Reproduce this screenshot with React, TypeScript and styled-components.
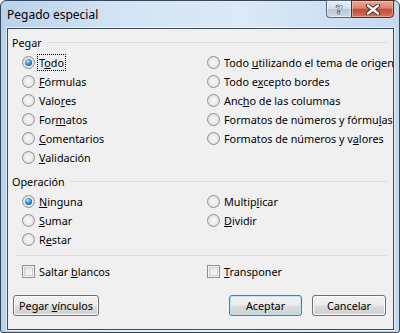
import styled, { createGlobalStyle } from "styled-components";

const Global = createGlobalStyle`
  html, body { margin: 0; padding: 0; background: #ffffff; }
  body {
    width: 400px;
    height: 333px;
    overflow: hidden;
    font-family: "Noto Sans", "Open Sans", sans-serif;
    font-size: 10.8px;
    color: #000;
  }
`;

const Window = styled.div`
  box-sizing: border-box;
  width: 400px;
  height: 333px;
  display: flex;
  flex-direction: column;
  border: 1px solid #34475c;
  border-radius: 6px 6px 3px 3px;
  background: linear-gradient(90deg, #b9d1ea 0%, #d4e4f4 30%, #dce9f6 60%, #c4d8ee 100%);
  padding: 0 5px 2px 6px;
`;

const TitleBar = styled.div`
  height: 27px;
  display: flex;
  align-items: flex-start;
  justify-content: space-between;
`;

const Title = styled.div`
  margin-top: 6px;
  font-size: 12px;
  line-height: 16px;
  color: #000;
`;

const CaptionButtons = styled.div`
  display: flex;
  margin-top: -1px;
`;

const HelpButton = styled.div`
  box-sizing: border-box;
  width: 25px;
  height: 18px;
  border: 1px solid #56687c;
  border-right: none;
  border-radius: 0 0 0 4px;
  background: linear-gradient(#e6eef7 0%, #d4dfea 48%, #b9c8d8 52%, #cdd9e6 100%);
  box-shadow: inset 0 0 0 1px rgba(255, 255, 255, 0.5);
  display: flex;
  align-items: center;
  justify-content: center;
  font-family: "DejaVu Sans", sans-serif;
  font-weight: bold;
  font-size: 13px;
  color: #fff;
  -webkit-text-stroke: 0.6px #3d4c5c;
`;

const CloseButton = styled.div`
  box-sizing: border-box;
  width: 43px;
  height: 18px;
  border: 1px solid #5a2720;
  border-radius: 0 0 4px 0;
  background: linear-gradient(#eaaa9c 0%, #dd8270 45%, #c54a33 52%, #d5735c 100%);
  box-shadow: inset 0 0 0 1px rgba(255, 220, 210, 0.45);
  display: flex;
  align-items: center;
  justify-content: center;
`;

const Client = styled.div`
  flex: 1;
  display: flex;
  flex-direction: column;
  border: 1px solid #3a4a5b;
  box-shadow: 0 0 0 1px rgba(255, 255, 255, 0.55);
  background: #f0f0f0;
  padding: 0 6px 12px 4px;
`;

const GroupHeader = styled.div<{ $top: number }>`
  height: 14px;
  margin-top: ${(p) => p.$top}px;
  display: flex;
  align-items: center;
  gap: 5px;
  &::after {
    content: "";
    flex: 1;
    height: 1px;
    background: #d5dfe5;
  }
`;

const Options = styled.div`
  margin-top: 4px;
  padding-left: 10px;
  display: grid;
  grid-template-columns: 185px 1fr;
`;

const Column = styled.div`
  display: flex;
  flex-direction: column;
`;

const OptionRow = styled.div`
  height: 19px;
  display: flex;
  align-items: center;
  gap: 2px;
  white-space: nowrap;
`;

const RadioCircle = styled.span<{ $on?: boolean }>`
  box-sizing: border-box;
  flex: none;
  width: 13px;
  height: 13px;
  border-radius: 50%;
  border: 1px solid #8c8f92;
  background: radial-gradient(circle at 50% 50%, #f8f8f8 0%, #ececec 45%, #d2d4d6 100%);
  display: flex;
  align-items: center;
  justify-content: center;
  &::after {
    content: "";
    display: ${(p) => (p.$on ? "block" : "none")};
    width: 7px;
    height: 7px;
    border-radius: 50%;
    background: radial-gradient(circle at 40% 35%, #c2ecff 0%, #3a97d9 40%, #0c4277 100%);
  }
`;

const CheckBox = styled.span`
  box-sizing: border-box;
  flex: none;
  width: 13px;
  height: 13px;
  border: 1px solid #8f8f8f;
  background: linear-gradient(135deg, #dcdcdc 0%, #f4f4f4 70%, #fbfbfb 100%);
  box-shadow: inset 0 0 0 1px #f4f4f4, inset 0 0 0 2px #cfcfcf;
`;

const Text = styled.span<{ $focus?: boolean }>`
  line-height: 15px;
  padding: 0 1px;
  border: 1px dotted ${(p) => (p.$focus ? "#000" : "transparent")};
`;

const Separator = styled.div`
  height: 1px;
  margin: 6px 0 0 4px;
  background: #d5dfe5;
`;

const ChecksRow = styled(Options)`
  margin-top: 6px;
`;

const Buttons = styled.div`
  margin-top: 14px;
  padding: 0 1px 0 1px;
  display: flex;
  align-items: center;
  gap: 10px;
`;

const Button = styled.div<{ $w: number; $default?: boolean; $push?: boolean }>`
  box-sizing: border-box;
  width: ${(p) => p.$w}px;
  height: 21px;
  margin-left: ${(p) => (p.$push ? "auto" : "0")};
  border: 1px solid ${(p) => (p.$default ? "#3c7fb1" : "#707070")};
  border-radius: 3px;
  background: linear-gradient(#f3f3f3 0%, #ebebeb 48%, #dddddd 52%, #cfcfcf 100%);
  box-shadow: inset 0 0 0 1px ${(p) => (p.$default ? "#bfe4f8" : "#fbfbfb")};
  display: flex;
  align-items: center;
  justify-content: center;
  white-space: nowrap;
`;

const Mn = ({ t }: { t: string }) => {
  const i = t.indexOf("&");
  if (i < 0) return <span>{t}</span>;
  return (
    <span>
      {t.slice(0, i)}
      <u>{t[i + 1]}</u>
      {t.slice(i + 2)}
    </span>
  );
};

const Radio = ({ t, on, focus }: { t: string; on?: boolean; focus?: boolean }) => (
  <OptionRow>
    <RadioCircle $on={on} />
    <Text $focus={focus}>
      <Mn t={t} />
    </Text>
  </OptionRow>
);

const Check = ({ t }: { t: string }) => (
  <OptionRow>
    <CheckBox />
    <Text>
      <Mn t={t} />
    </Text>
  </OptionRow>
);

const App = () => {
  return (
    <Window>
      <Global />
      <TitleBar>
        <Title>Pegado especial</Title>
        <CaptionButtons>
          <HelpButton>?</HelpButton>
          <CloseButton>
            <svg width="16" height="11" viewBox="0 0 16 11">
              <path
                d="M3 1.5 L13 9.5 M13 1.5 L3 9.5"
                stroke="#3a2420"
                strokeWidth="4.2"
                strokeLinecap="round"
              />
              <path
                d="M3 1.5 L13 9.5 M13 1.5 L3 9.5"
                stroke="#ffffff"
                strokeWidth="2.4"
                strokeLinecap="round"
              />
            </svg>
          </CloseButton>
        </CaptionButtons>
      </TitleBar>
      <Client>
        <GroupHeader $top={6}>Pegar</GroupHeader>
        <Options>
          <Column>
            <Radio t="T&odo" on focus />
            <Radio t="&Fórmulas" />
            <Radio t="Valo&res" />
            <Radio t="For&matos" />
            <Radio t="&Comentarios" />
            <Radio t="&Validación" />
          </Column>
          <Column>
            <Radio t="Todo &utilizando el tema de origen" />
            <Radio t="Todo e&xcepto bordes" />
            <Radio t="Anc&ho de las columnas" />
            <Radio t="Formatos de números y fórmu&las" />
            <Radio t="Formatos de números y v&alores" />
          </Column>
        </Options>
        <GroupHeader $top={7}>Operación</GroupHeader>
        <Options>
          <Column>
            <Radio t="&Ninguna" on />
            <Radio t="&Sumar" />
            <Radio t="R&estar" />
          </Column>
          <Column>
            <Radio t="Multip&licar" />
            <Radio t="&Dividir" />
          </Column>
        </Options>
        <Separator />
        <ChecksRow>
          <Check t="Saltar &blancos" />
          <Check t="&Transponer" />
        </ChecksRow>
        <Buttons>
          <Button $w={86}>
            <Mn t="Pegar &vínculos" />
          </Button>
          <Button $w={73} $default $push>
            <span>Aceptar</span>
          </Button>
          <Button $w={74}>
            <span>Cancelar</span>
          </Button>
        </Buttons>
      </Client>
    </Window>
  );
};

export default App;
